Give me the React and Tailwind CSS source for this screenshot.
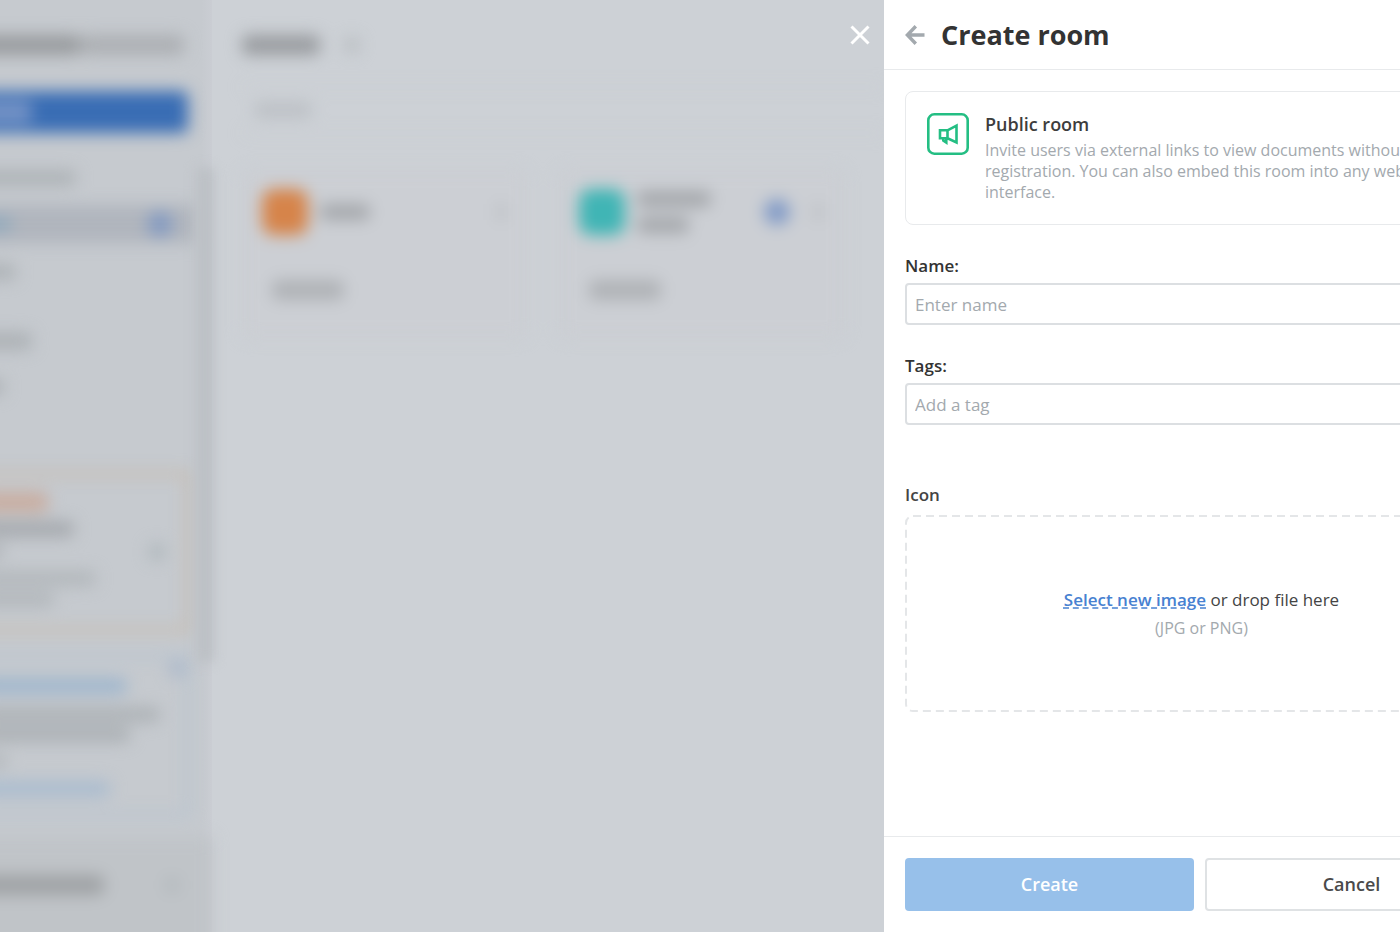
import { clsx } from "clsx";

// blurred placeholder line
function Bar({ className }) {
  return <div className={clsx("shrink-0 rounded-md", className)} />;
}

function Sidebar() {
  return (
    <aside className="relative flex h-full w-[212px] shrink-0 flex-col bg-linear-to-r from-[#c6cacf] from-95% to-[#cacdd3]">
      <div className="flex flex-1 flex-col blur-[8px]">
        <div className="-ml-6 flex pt-[35px]">
          <Bar className="h-[20px] w-[104px] bg-[#989b9e]" />
          <Bar className="h-[20px] w-[104px] bg-[#acafb3]" />
        </div>

        <div className="mt-[36px] -ml-6 flex h-[42px] w-[212px] items-center rounded-md bg-[#396db4]">
          <Bar className="h-[22px] w-[56px] bg-[#7593c6]" />
        </div>

        <Bar className="mt-[37px] -ml-6 h-[16px] w-[100px] bg-[#aeb3b7]" />

        <div className="mt-[19px] -ml-6 flex h-[38px] w-[220px] items-center justify-between bg-[#b0b5bd] pr-[23px]">
          <Bar className="h-[14px] w-[36px] bg-[#8fa9bd]" />
          <div className="size-[26px] rounded-full bg-[#859bc1]" />
        </div>

        <Bar className="mt-[21px] -ml-6 h-[16px] w-[40px] bg-[#aeb3b7]" />
        <Bar className="mt-[52px] -ml-6 h-[18px] w-[56px] bg-[#adb2b6]" />
        <Bar className="mt-[29px] -ml-6 h-[16px] w-[28px] bg-[#adb2b6]" />

        <div className="mt-[77px] -ml-6 flex h-[160px] w-[214px] items-center justify-between border-4 border-[#c8b8a5] pr-[20px]">
          <div className="flex flex-col pb-[6px]">
            <Bar className="h-[20px] w-[68px] bg-[#c9ada0]" />
            <Bar className="mt-[9px] h-[16px] w-[94px] bg-[#a5a9ae]" />
            <Bar className="mt-2 h-[12px] w-[24px] bg-[#acb0b5]" />
            <Bar className="mt-[14px] h-[15px] w-[116px] bg-[#b2b7bb]" />
            <Bar className="mt-[6px] h-[15px] w-[74px] bg-[#b2b7bb]" />
          </div>
          <div className="size-[18px] rounded-full bg-[#b0b8bc]" />
        </div>

        <div className="mt-[22px] -ml-6 flex h-[163px] w-[214px] justify-between border-4 border-[#b4c2d0] pt-5">
          <div className="flex flex-col">
            <Bar className="h-[16px] w-[147px] bg-[#9fb6cd]" />
            <Bar className="mt-[13px] h-[15px] w-[180px] bg-[#adb2b6]" />
            <Bar className="mt-[5px] h-[15px] w-[150px] bg-[#abb0b4]" />
            <Bar className="mt-[13px] h-[12px] w-[28px] bg-[#b1b6ba]" />
            <Bar className="mt-[14px] h-[16px] w-[130px] bg-[#aabccf]" />
          </div>
          <div className="mt-[-18px] size-[18px] rounded-full bg-[#adb9ca]" />
        </div>

        <div className="mt-[20px] -mb-6 -ml-6 flex flex-1 items-center justify-between bg-[#c0c4c8] pr-8 pb-6">
          <Bar className="h-[20px] w-[128px] bg-[#9fa2a5]" />
          <div className="size-[16px] rounded-full bg-[#b3b9bd]" />
        </div>
      </div>
      {/* scrollbar */}
      <div className="absolute top-[168px] right-[-2px] h-[494px] w-[18px] bg-[#bcc0c5] blur-[6px]" />
    </aside>
  );
}

function RoomCard({ color, lines, badge }) {
  return (
    <div className="w-[285px] shrink-0 rounded-lg border-2 border-[#c7cacf] bg-[#cccfd4]">
      <div className="flex h-[80px] items-center pr-5 pl-[18px]">
        <div className={clsx("size-[46px] rounded-xl", color)} />
        <div className="ml-3 flex flex-col gap-[10px]">
          {lines.map((width) => (
            <Bar key={width} className={clsx("h-[16px] bg-[#a4a7ab]", width)} />
          ))}
        </div>
        <div className="ml-auto flex items-center gap-6">
          {badge && <div className="size-[26px] rounded-full bg-[#829bc7]" />}
          <div className="h-[16px] w-[8px] bg-[#babdc1]" />
        </div>
      </div>
      <div className="border-t-2 border-[#c9ccd1] px-[28px] pt-[26px] pb-[36px]">
        <Bar className="h-[20px] w-[72px] bg-[#afb2b6]" />
      </div>
    </div>
  );
}

function RoomsPage() {
  return (
    <main className="min-w-0 flex-1 overflow-hidden pl-[30px]">
      <div className="blur-[8px]">
        <div className="flex items-center gap-6 pt-[35px]">
          <Bar className="h-[20px] w-[78px] bg-[#999ca0]" />
          <div className="size-[16px] rounded-full bg-[#b8bcc0]" />
        </div>
        <div className="mt-[31px] flex h-[48px] items-center border-y-2 border-[#cacdd2] pl-3">
          <Bar className="h-[16px] w-[58px] bg-[#bcc0c5]" />
        </div>
        <div className="mt-9 flex gap-8">
          <RoomCard color="bg-[#d6844a]" lines={["w-[50px]"]} />
          <RoomCard color="bg-[#40b5b5]" lines={["w-[74px]", "w-[52px]"]} badge />
        </div>
      </div>
    </main>
  );
}

function MegaphoneIcon() {
  return (
    <svg viewBox="0 0 42 42" className="size-[42px] shrink-0" fill="none" stroke="#24be83" strokeWidth="2.6">
      <rect x="1.3" y="1.3" width="39.4" height="39.4" rx="6" />
      <path d="M13 17.3h7.5v8H13zM20.5 17.3 29.5 12.6v16.8l-9-4.1M16.3 25.3v2.2l3 2v-4" />
    </svg>
  );
}

function Field({ id, label, placeholder }) {
  return (
    <div>
      <label htmlFor={id} className="block text-[17px] leading-[24px] font-semibold text-[#333333]">
        {label}
      </label>
      <input
        id={id}
        type="text"
        placeholder={placeholder}
        className="mt-[5px] block h-[42px] w-full rounded-sm border-2 border-[#dcdfe2] bg-white px-2 text-[17px] text-[#333333] outline-none placeholder:text-[#a3a9ae]"
      />
    </div>
  );
}

function CreateRoomPanel() {
  return (
    <form className="flex h-full w-[635px] flex-col bg-white">
      <header className="flex h-[70px] shrink-0 items-center gap-4 border-b border-[#e8eaec] px-[21px]">
        <button type="button" aria-label="Back">
          <svg viewBox="0 0 20 20" className="size-[20px]" fill="none" stroke="#a3a9ae" strokeWidth="3.4">
            <path d="M19.5 10H3M10.8 1.3 2.4 10l8.4 8.7" />
          </svg>
        </button>
        <h1 className="text-[27px] leading-[36px] font-bold text-[#333333]">Create room</h1>
      </header>

      <div className="flex flex-1 flex-col px-[21px] pt-[21px]">
        <section className="flex gap-4 rounded-lg border border-[#e8eaec] p-[21px]">
          <MegaphoneIcon />
          <div className="w-[440px]">
            <h2 className="text-[18px] leading-[22px] font-semibold text-[#3d3d3d]">Public room</h2>
            <p className="mt-[5px] text-[16px] leading-[21px] text-[#a3a9ae]">
              Invite users via external links to view documents without registration. You can also embed this room into any web interface.
            </p>
          </div>
        </section>

        <div className="mt-[29px] flex flex-col gap-[29px]">
          <Field id="name" label="Name:" placeholder="Enter name" />
          <Field id="tags" label="Tags:" placeholder="Add a tag" />
        </div>

        <h2 className="mt-[58px] text-[17px] leading-[24px] font-semibold text-[#444444]">Icon</h2>
        <div className="relative mt-[8px] flex h-[197px] flex-col items-center justify-center gap-1">
          <svg className="absolute inset-0 size-full" fill="none">
            <rect x="1" y="1" width="591" height="195" rx="7" stroke="#e4e6e8" strokeWidth="2" strokeDasharray="8 5" />
          </svg>
          <p className="relative text-[17px] leading-[24px] text-[#444444]">
            <a
              href="#"
              className="font-semibold text-[#4781d1] underline decoration-dashed underline-offset-2"
            >
              Select new image
            </a>{" "}
            or drop file here
          </p>
          <p className="relative text-[16px] leading-[24px] text-[#a3a9ae]">(JPG or PNG)</p>
        </div>
      </div>

      <footer className="flex shrink-0 gap-[11px] border-t border-[#e8eaec] px-[21px] py-[21px]">
        <button type="submit" className="h-[53px] flex-1 rounded-sm bg-[#97c0ea] text-[18px] font-semibold text-white">
          Create
        </button>
        <button type="button" className="h-[53px] flex-1 rounded-sm border-2 border-[#dfe2e4] bg-white text-[18px] font-semibold text-[#4a4a4a]">
          Cancel
        </button>
      </footer>
    </form>
  );
}

export default function App() {
  return (
    <div className="flex h-screen overflow-hidden bg-[#cdd1d6] font-['Open_Sans',sans-serif]">
      <div className="relative flex min-w-0 flex-1 overflow-hidden">
        <Sidebar />
        <RoomsPage />
        <button type="button" aria-label="Close" className="absolute top-[25px] right-[14px]">
          <svg viewBox="0 0 20 20" className="size-[20px]" fill="none" stroke="#ffffff" strokeWidth="3">
            <path d="M1.5 1.5l17 17M18.5 1.5l-17 17" />
          </svg>
        </button>
      </div>
      {/* the panel is wider than its slot and is cut at the window edge */}
      <div className="w-[516px] shrink-0 overflow-hidden">
        <CreateRoomPanel />
      </div>
    </div>
  );
}
